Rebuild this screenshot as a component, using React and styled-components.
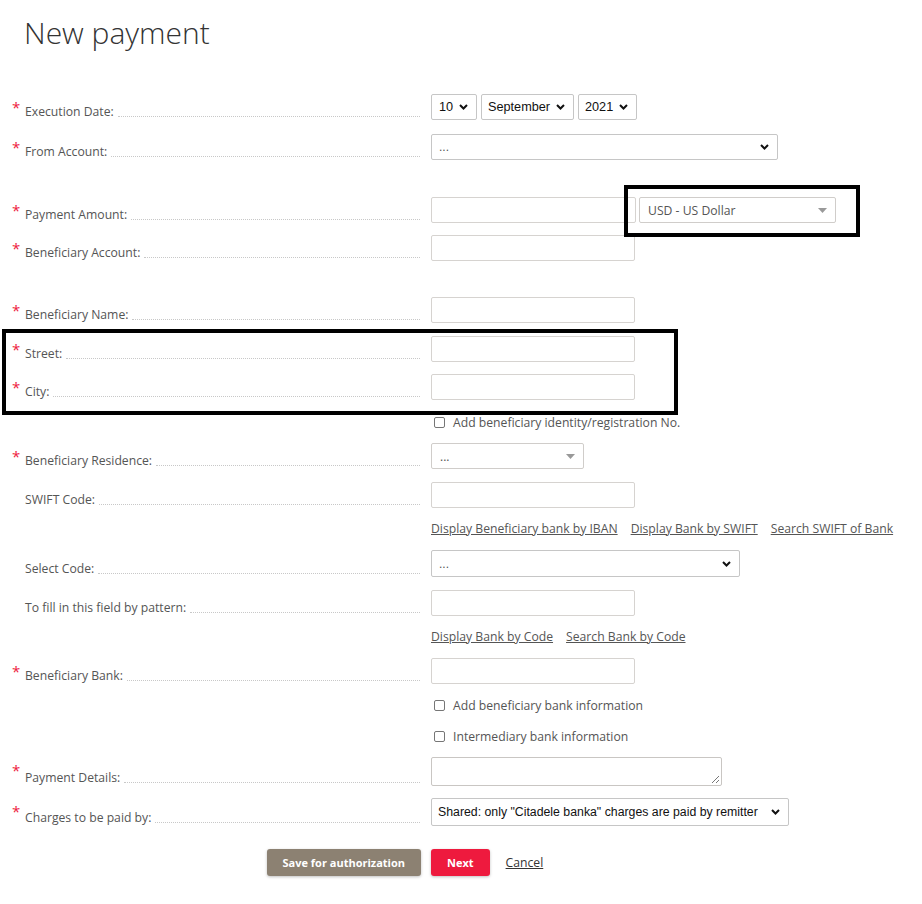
import React from 'react';
import styled, { createGlobalStyle } from 'styled-components';

const GlobalStyle = createGlobalStyle`
    body {
        margin: 0;
        background: #fff;
        font-family: "Open Sans", "Liberation Sans", sans-serif;
        color: #555;
    }
`;

const Page = styled.div`
    position: relative;
    width: 922px;
    min-height: 904px;
    padding-top: 12px;
    box-sizing: border-box;
`;

const Title = styled.h1`
    margin: 0 0 0 24px;
    font-size: 30px;
    font-weight: 300;
    color: #333;
    line-height: 42px;
`;

const Form = styled.div`
    display: flex;
    flex-direction: column;
    margin-top: 40px;
`;

const Row = styled.div`
    display: grid;
    grid-template-columns: 420px 1fr;
    column-gap: 11px;
    margin-top: ${p => p.top}px;
    min-height: ${p => p.h || 26}px;
`;

const LabelCell = styled.div`
    display: flex;
    align-items: flex-end;
    font-size: 12.2px;
    line-height: 17px;
    color: #555;
`;

const Star = styled.span`
    width: 25px;
    padding-left: 12px;
    box-sizing: border-box;
    color: #ee1c3e;
    font-size: 15px;
    line-height: 17px;
    align-self: flex-start;
    margin-top: 5px;
`;

const LabelText = styled.span`
    white-space: nowrap;
`;

const Leader = styled.span`
    flex: 1;
    border-bottom: 1px dotted #c8c8c8;
    margin: 0 0 3px 4px;
`;

const Field = styled.div`
    display: flex;
    align-items: center;
    gap: ${p => p.gap || 4}px;
`;

const TextInput = styled.div`
    width: ${p => p.w || 204}px;
    height: 26px;
    border: 1px solid #d6d3d0;
    border-radius: 2px;
    box-sizing: border-box;
`;

const TextArea = styled.div`
    position: relative;
    width: 291px;
    height: 29px;
    border: 1px solid #c9c6c3;
    border-radius: 2px;
    box-sizing: border-box;
`;

const Grip = styled.svg`
    position: absolute;
    right: 1px;
    bottom: 1px;
`;

const NativeSelect = styled.div`
    display: flex;
    align-items: center;
    justify-content: space-between;
    width: ${p => p.w}px;
    height: ${p => p.h || 26}px;
    padding: 0 7px 0 ${p => p.pl || 7}px;
    border: 1px solid #c6c6c6;
    border-radius: 2px;
    box-sizing: border-box;
    font-family: "Liberation Sans", Arial, sans-serif;
    font-size: ${p => p.fs || 12.7}px;
    color: #111;
    white-space: nowrap;
`;

const CustomSelect = styled.div`
    display: flex;
    align-items: center;
    justify-content: space-between;
    width: ${p => p.w}px;
    height: 26px;
    padding: 0 8px 0 8px;
    border: 1px solid #d0cdca;
    border-radius: 2px;
    box-sizing: border-box;
    font-size: 12.2px;
    color: #555;
`;

const Dots = styled.span`
    font-size: 12px;
    color: #555;
`;

const CheckRow = styled.label`
    display: flex;
    align-items: center;
    gap: 8px;
    padding-left: 3px;
    font-size: 12.2px;
    color: #555;
`;

const Box = styled.span`
    width: 11px;
    height: 11px;
    border: 1px solid #767676;
    border-radius: 2px;
    box-sizing: border-box;
`;

const Links = styled.div`
    display: flex;
    align-items: center;
    gap: 13px;
`;

const Link = styled.a`
    font-size: 12.2px;
    color: #555;
    text-decoration: underline;
    white-space: nowrap;
`;

const Buttons = styled.div`
    display: flex;
    justify-content: flex-end;
`;

const Button = styled.button`
    height: 27px;
    padding: 0 ${p => p.px}px;
    border: none;
    border-radius: 3px;
    background: ${p => p.bg};
    color: #fff;
    font-family: "Open Sans", sans-serif;
    font-weight: 700;
    font-size: 11px;
    box-shadow: 0 1px 3px rgba(0, 0, 0, 0.25);
`;

const Cancel = styled.a`
    margin-left: 12px;
    font-size: 12.2px;
    color: #333;
    text-decoration: underline;
`;

const Highlight = styled.div`
    position: absolute;
    left: ${p => p.x}px;
    top: ${p => p.y}px;
    width: ${p => p.w}px;
    height: ${p => p.h}px;
    border: 4px solid #000;
    box-sizing: border-box;
    pointer-events: none;
`;

const Chevron = () => (
    <svg width="11" height="8" viewBox="0 0 11 8">
        <path d="M2 2 L5.5 5.5 L9 2" fill="none" stroke="#111" strokeWidth="2" />
    </svg>
);

const Caret = () => (
    <svg width="9" height="5" viewBox="0 0 9 5">
        <path d="M0 0 H9 L4.5 5 Z" fill="#999" />
    </svg>
);

const Label = ({ text, req, top, children, h }) => (
    <Row top={top} h={h}>
        <LabelCell>
            <Star>{req ? '*' : ''}</Star>
            <LabelText>{text}</LabelText>
            <Leader />
        </LabelCell>
        {children}
    </Row>
);

const Extra = ({ top, h, children }) => (
    <Row top={top} h={h}>
        <div />
        {children}
    </Row>
);

export default function App() {
    return (
        <Page>
            <GlobalStyle />
            <Title>New payment</Title>
            <Form>
                <Label text="Execution Date:" req top={0}>
                    <Field gap={4}>
                        <NativeSelect w={46} pl={7}>10 <Chevron /></NativeSelect>
                        <NativeSelect w={93} pl={6}>September <Chevron /></NativeSelect>
                        <NativeSelect w={59} pl={6}>2021 <Chevron /></NativeSelect>
                    </Field>
                </Label>
                <Label text="From Account:" req top={14}>
                    <Field>
                        <NativeSelect w={347}><Dots>...</Dots><Chevron /></NativeSelect>
                    </Field>
                </Label>
                <Label text="Payment Amount:" req top={37}>
                    <Field gap={3}>
                        <TextInput w={205} />
                        <CustomSelect w={197}>USD - US Dollar <Caret /></CustomSelect>
                    </Field>
                </Label>
                <Label text="Beneficiary Account:" req top={12}>
                    <Field><TextInput /></Field>
                </Label>
                <Label text="Beneficiary Name:" req top={36}>
                    <Field><TextInput /></Field>
                </Label>
                <Label text="Street:" req top={13}>
                    <Field><TextInput /></Field>
                </Label>
                <Label text="City:" req top={12}>
                    <Field><TextInput /></Field>
                </Label>
                <Extra top={13} h={18}>
                    <CheckRow><Box />Add beneficiary identity/registration No.</CheckRow>
                </Extra>
                <Label text="Beneficiary Residence:" req top={12}>
                    <Field>
                        <CustomSelect w={153}><Dots>...</Dots><Caret /></CustomSelect>
                    </Field>
                </Label>
                <Label text="SWIFT Code:" top={13}>
                    <Field><TextInput /></Field>
                </Label>
                <Extra top={11} h={18}>
                    <Links>
                        <Link>Display Beneficiary bank by IBAN</Link>
                        <Link>Display Bank by SWIFT</Link>
                        <Link>Search SWIFT of Bank</Link>
                    </Links>
                </Extra>
                <Label text="Select Code:" top={13} h={27}>
                    <Field>
                        <NativeSelect w={309} h={27}><Dots>...</Dots><Chevron /></NativeSelect>
                    </Field>
                </Label>
                <Label text="To fill in this field by pattern:" top={13}>
                    <Field><TextInput /></Field>
                </Label>
                <Extra top={11} h={18}>
                    <Links>
                        <Link>Display Bank by Code</Link>
                        <Link>Search Bank by Code</Link>
                    </Links>
                </Extra>
                <Label text="Beneficiary Bank:" req top={13}>
                    <Field><TextInput /></Field>
                </Label>
                <Extra top={12} h={18}>
                    <CheckRow><Box />Add beneficiary bank information</CheckRow>
                </Extra>
                <Extra top={13} h={18}>
                    <CheckRow><Box />Intermediary bank information</CheckRow>
                </Extra>
                <Label text="Payment Details:" req top={12} h={29}>
                    <Field>
                        <TextArea>
                            <Grip width="9" height="9" viewBox="0 0 9 9">
                                <path d="M8 1 L1 8 M8 5 L5 8" stroke="#777" strokeWidth="1" />
                            </Grip>
                        </TextArea>
                    </Field>
                </Label>
                <Label text="Charges to be paid by:" req top={12} h={28}>
                    <Field>
                        <NativeSelect w={358} h={28} pl={6} fs={12.3}>Shared: only "Citadele banka" charges are paid by remitter <Chevron /></NativeSelect>
                    </Field>
                </Label>
                <Row top={23} h={27}>
                    <Buttons>
                        <Button bg="#8c8172" px={16} style={{ marginRight: -1 }}>Save for authorization</Button>
                    </Buttons>
                    <Field gap={0}>
                        <Button bg="#ee1a3e" px={16}>Next</Button>
                        <Cancel>Cancel</Cancel>
                    </Field>
                </Row>
            </Form>
            <Highlight x={624} y={185} w={236} h={52} />
            <Highlight x={2} y={329} w={676} h={86} />
        </Page>
    );
}
